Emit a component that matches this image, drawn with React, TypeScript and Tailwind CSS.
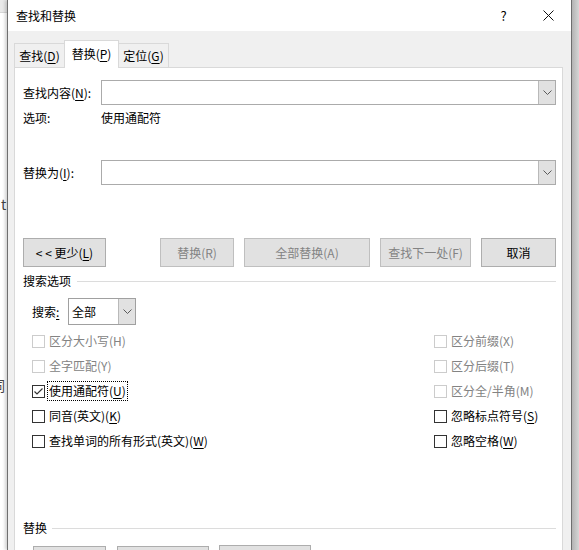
import type { ReactNode } from 'react';

function Chevron() {
  return (
    <svg width="9" height="5" viewBox="0 0 9 5" className="block">
      <polyline points="0.5,0.5 4.5,4.5 8.5,0.5" fill="none" stroke="#5a5a5a" strokeWidth="1" />
    </svg>
  );
}

function Combo() {
  return (
    <div className="flex-1 h-[25px] flex border border-[#ababab] bg-white">
      <div className="flex-1" />
      <div className="w-[17px] bg-[#e1e1e1] border-l border-[#b9b9b9] flex items-center justify-center">
        <Chevron />
      </div>
    </div>
  );
}

function Btn({ children, w, disabled }: { children?: ReactNode; w: string; disabled?: boolean }) {
  return (
    <div
      className={`${w} h-[29px] flex items-center justify-center bg-[#e1e1e1] border ${
        disabled ? 'border-[#bfbfbf] text-[#838383]' : 'border-[#adadad] text-black'
      }`}
    >
      {children}
    </div>
  );
}

function Check({
  children,
  disabled,
  checked,
  focused,
}: {
  children: ReactNode;
  disabled?: boolean;
  checked?: boolean;
  focused?: boolean;
}) {
  return (
    <div className="h-[20px] flex items-center">
      <div
        className={`w-[13px] h-[13px] border bg-white flex items-center justify-center ${
          disabled ? 'border-[#cccccc]' : 'border-[#333333]'
        }`}
      >
        {checked && (
          <svg width="11" height="11" viewBox="0 0 11 11">
            <polyline points="1.5,5.5 4,8 9.5,2.5" fill="none" stroke="#333" strokeWidth="1.2" />
          </svg>
        )}
      </div>
      <div
        className={`ml-[2px] h-[20px] px-[1px] flex items-center border border-dotted ${
          focused ? 'border-black' : 'border-transparent'
        } ${disabled ? 'text-[#838383]' : 'text-black'}`}
      >
        {children}
      </div>
    </div>
  );
}

const U = ({ c }: { c: string }) => <span className="underline underline-offset-2">{c}</span>;

export default function App() {
  return (
    <div className="flex w-[579px] h-[550px] overflow-hidden bg-white text-[12px] leading-none text-black font-['Noto_Sans_CJK_SC','Microsoft_YaHei',sans-serif]">
      {/* document behind the dialog */}
      <div className="w-[7px] flex flex-col overflow-hidden text-[14px] text-[#444]">
        <div className="h-[13px] bg-[#e9e9e9] border-b border-[#d6d6d6]" />
        <span className="mt-[184px] ml-[1px]">t</span>
        <span className="mt-[167px] -ml-[9px] whitespace-nowrap">词</span>
      </div>

      {/* dialog */}
      <div className="w-[565px] flex flex-col border-x border-[#6f6f6f] bg-[#f0f0f0] shadow-[-2px_0_3px_rgba(0,0,0,0.18)]">
        <div className="h-[31px] shrink-0 bg-white flex items-center pl-[8px]">
          <span className="flex-1">查找和替换</span>
          <div className="w-[45px] flex justify-center text-[13px]">?</div>
          <div className="w-[45px] flex justify-center">
            <svg width="11" height="11" viewBox="0 0 11 11">
              <path d="M0.5 0.5 L10.5 10.5 M10.5 0.5 L0.5 10.5" stroke="#111" strokeWidth="1" />
            </svg>
          </div>
        </div>

        {/* tabs */}
        <div className="mt-[9px] ml-[6px] h-[27px] flex items-end shrink-0">
          <div className="w-[50px] h-[24px] border-l border-t border-[#d9d9d9] flex items-center justify-center">
            查找(<U c="D" />)
          </div>
          <div className="relative z-10 -mb-px w-[55px] h-[28px] bg-white border-x border-t border-[#d9d9d9] flex items-center justify-center pb-[2px]">
            替换(<U c="P" />)
          </div>
          <div className="w-[50px] h-[24px] border-r border-t border-[#d9d9d9] flex items-center justify-center">
            定位(<U c="G" />)
          </div>
        </div>

        {/* panel */}
        <div className="flex-1 ml-[6px] mr-[8px] bg-white border border-[#d9d9d9] pl-[8px] pr-[6px] pt-[12px] flex flex-col">
          <div className="flex items-center h-[25px]">
            <span className="w-[78px]">
              查找内容(<U c="N" />):
            </span>
            <Combo />
          </div>
          <div className="flex items-center h-[16px] mt-[5px]">
            <span className="w-[78px]">选项:</span>
            <span>使用通配符</span>
          </div>
          <div className="flex items-center h-[25px] mt-[34px]">
            <span className="w-[78px]">
              替换为(<U c="I" />):
            </span>
            <Combo />
          </div>

          <div className="flex mt-[53px]">
            <Btn w="w-[83px]">
              {'< < 更少('}
              <U c="L" />)
            </Btn>
            <div className="ml-[54px]">
              <Btn w="w-[74px]" disabled>
                替换(R)
              </Btn>
            </div>
            <div className="ml-[10px]">
              <Btn w="w-[126px]" disabled>
                全部替换(A)
              </Btn>
            </div>
            <div className="ml-[10px]">
              <Btn w="w-[91px]" disabled>
                查找下一处(F)
              </Btn>
            </div>
            <div className="ml-[10px]">
              <Btn w="w-[75px]">取消</Btn>
            </div>
          </div>

          <div className="flex items-center h-[16px] mt-[6px]">
            <span>搜索选项</span>
            <div className="flex-1 ml-[6px] h-px bg-[#dcdcdc]" />
          </div>

          <div className="flex items-center mt-[9px] pl-[9px]">
            <span className="w-[36px]">
              搜索<U c=":" />
            </span>
            <div className="w-[68px] h-[27px] flex border border-[#a0a0a0] bg-white">
              <div className="flex-1 flex items-center pl-[3px]">全部</div>
              <div className="w-[17px] bg-[#e1e1e1] border-l border-[#b9b9b9] flex items-center justify-center">
                <Chevron />
              </div>
            </div>
          </div>

          <div className="flex mt-[6px] pl-[9px]">
            <div className="w-[402px] flex flex-col gap-[5px]">
              <Check disabled>区分大小写(H)</Check>
              <Check disabled>全字匹配(Y)</Check>
              <Check checked focused>
                使用通配符(<U c="U" />)
              </Check>
              <Check>
                同音(英文)(<U c="K" />)
              </Check>
              <Check>
                查找单词的所有形式(英文)(<U c="W" />)
              </Check>
            </div>
            <div className="flex flex-col gap-[5px]">
              <Check disabled>区分前缀(X)</Check>
              <Check disabled>区分后缀(T)</Check>
              <Check disabled>区分全/半角(M)</Check>
              <Check>
                忽略标点符号(<U c="S" />)
              </Check>
              <Check>
                忽略空格(<U c="W" />)
              </Check>
            </div>
          </div>

          <div className="flex items-center h-[16px] mt-[69px]">
            <span>替换</span>
            <div className="flex-1 ml-[5px] h-px bg-[#dcdcdc]" />
          </div>

          {/* buttons below the fold: only their top edges show */}
          <div className="flex mt-[10px] pl-[10px]">
            <Btn w="w-[73px]" />
            <div className="ml-[11px]">
              <Btn w="w-[92px]" />
            </div>
            <div className="ml-[10px] -mt-px">
              <Btn w="w-[92px]" />
            </div>
          </div>
        </div>
      </div>

      <div className="w-[7px] bg-gradient-to-r from-[#b3b3b3] to-[#d6d6d6]" />
    </div>
  );
}
